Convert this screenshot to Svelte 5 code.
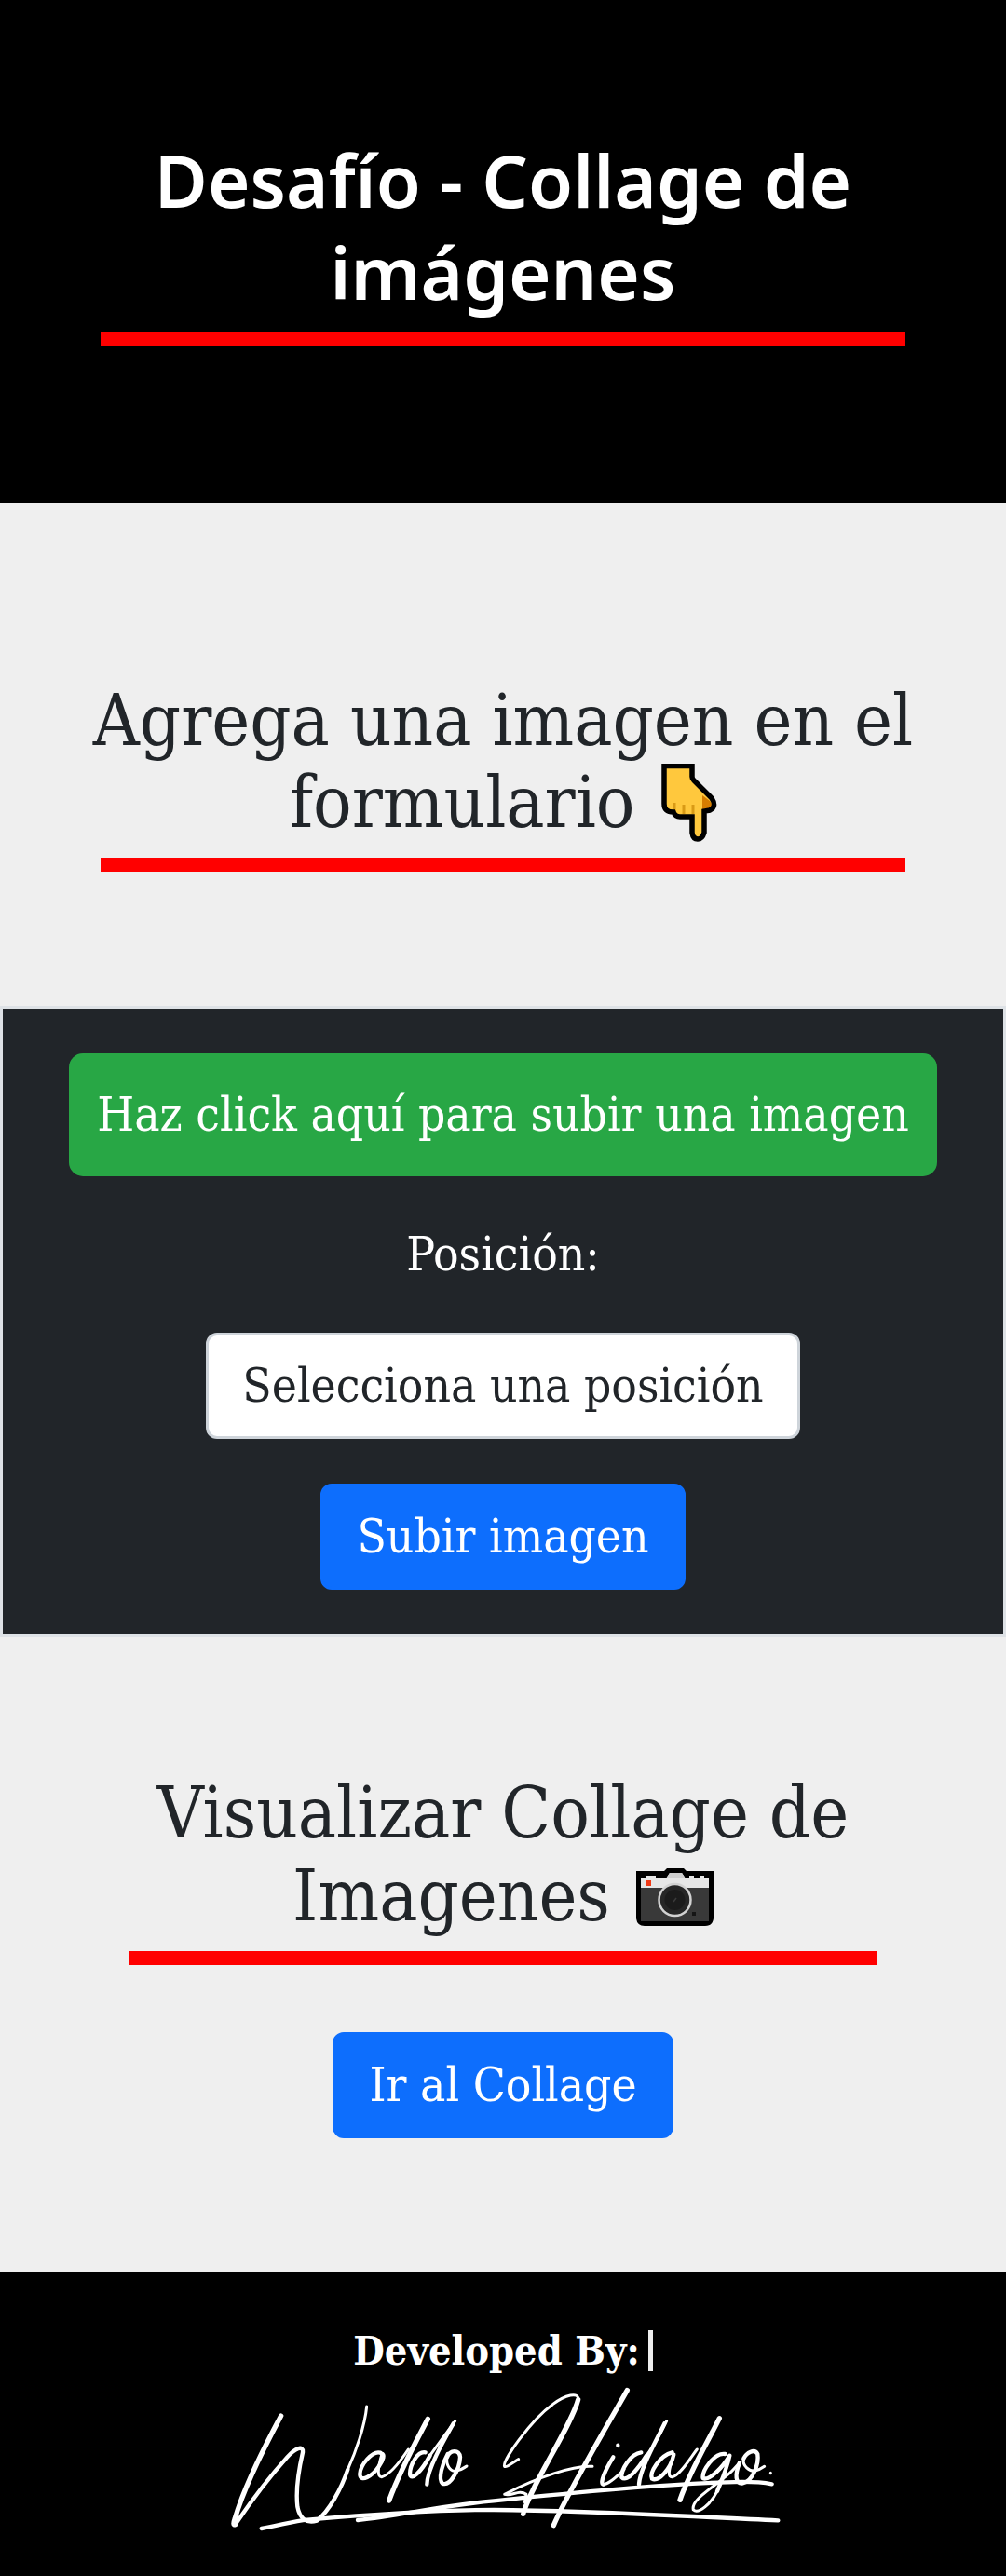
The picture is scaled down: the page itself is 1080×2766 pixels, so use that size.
<script>
  const positions = ['1', '2', '3', '4', '5', '6', '7', '8', '9'];
  let position = $state('');
</script>

<header class="hero">
  <h1>Desafío - Collage de imágenes</h1>
  <div class="rule"></div>
</header>

<main>
  <section class="intro">
    <h2>
      Agrega una imagen en el formulario
      <svg class="emoji hand" viewBox="0 0 60 84" role="img" aria-label="abajo">
        <path d="M3 2.500H33V16L54 37Q60 46 52 50L46 51V74Q44 81 39 81Q34 81 33 74V57H20Q15 57 13 52Q3 52 3 43Z" fill="#ffc83d" />
        <path d="M44 34L52 40Q57 46 51 48L44 49Z" fill="#d67d00" />
        <path d="M14 42V51M24 44V54M34 44V54" stroke="#d99a16" stroke-width="3" fill="none" />
        <path d="M3 2.500H33V14Q33 16 35 18L54 37Q60 46 52 50L46 51V74Q44 81 39 81Q34 81 33 74V57H20Q15 57 13 52Q3 52 3 43Z" fill="none" stroke="#000" stroke-width="5.500" />
      </svg>
    </h2>
    <div class="rule"></div>
  </section>

  <form class="panel" onsubmit={(event) => event.preventDefault()}>
    <label class="upload" for="imagen">Haz click aquí para subir una imagen</label>
    <input class="file" id="imagen" type="file" accept="image/*" />
    <label class="caption" for="posicion">Posición:</label>
    <select id="posicion" bind:value={position}>
      <option value="">Selecciona una posición</option>
      {#each positions as item}
        <option value={item}>{item}</option>
      {/each}
    </select>
    <button class="action" type="submit">Subir imagen</button>
  </form>

  <section class="viewer">
    <h2>
      Visualizar Collage de Imagenes
      <svg class="emoji camera" viewBox="0 0 83 62" role="img" aria-label="cámara">
        <path d="M0 3H30L33 0H51L54 3H83V54Q82 62 74 62H9Q1 62 0 54Z" fill="#000" />
        <path d="M5 11H11V8H21V11H32L36 5H49L53 11H57V8H62V11H68V8H73V11H78V21H5Z" fill="#e6e6e6" />
        <path d="M32 11L36 5H49L53 11Z" fill="#cfcfcf" />
        <path d="M5 21H78V57H5Z" fill="#393939" />
        <path d="M10 13H16V19H10Z" fill="#f03a17" />
        <path d="M60 47H64V51H60Z" fill="#151515" />
        <circle cx="41.500" cy="34" r="17" fill="#262626" stroke="#d2d2d2" stroke-width="2.500" />
        <circle cx="41.500" cy="34" r="11" fill="#1b1b1b" />
        <path d="M40 36L43 32" stroke="#3a3a3a" stroke-width="1.500" />
      </svg>
    </h2>
    <div class="rule"></div>
    <a class="action" href="#collage">Ir al Collage</a>
  </section>
</main>

<footer>
  <p>Developed By:<span class="caret"></span></p>
  <svg class="signature" viewBox="0 15 1860 560" role="img" aria-label="Waldo Hidalgo">
    <g fill="none" stroke="#fff" stroke-linecap="round" stroke-linejoin="round">
      <g stroke-width="16">
        <path d="M215 117C160 220 95 350 67 447Q58 472 68 467" />
        <path d="M688 127C650 200 600 290 563 390" />
        <path d="M1172 65C1150 150 1020 340 995 433" />
        <path d="M1330 35C1270 140 1140 360 1093 470" />
        <path d="M1627 125C1590 200 1530 300 1500 388" />
      </g>
      <g stroke-width="13">
        <path d="M68 467C120 390 190 300 235 250C260 222 287 210 285 235C270 300 262 360 268 410C275 450 300 465 330 455C370 425 410 350 430 290" />
        <path d="M535 236C510 228 470 275 469 305C470 335 510 310 530 280C545 260 550 240 538 238" />
        <path d="M680 235C655 230 630 275 630 305C634 328 665 300 695 245M770 142C740 195 685 290 685 338" />
        <path d="M752 240C735 270 720 320 735 335C760 345 790 290 792 250C790 225 760 225 750 250" />
        <path d="M1285 250C1260 290 1240 335 1253 338M1300 212V213" />
        <path d="M1375 235C1340 240 1310 290 1312 315C1330 335 1370 280 1392 245M1450 142C1425 195 1370 290 1368 338" />
        <path d="M1475 235C1435 245 1400 300 1410 320C1430 330 1470 290 1480 242" />
        <path d="M1645 240C1610 235 1570 295 1574 318C1595 328 1640 280 1660 245C1650 290 1640 310 1620 360" />
        <path d="M1692 268C1675 310 1680 335 1700 335C1735 330 1755 270 1750 240C1740 222 1715 235 1705 255" />
        <path d="M152 480C210 470 260 455 300 452C500 435 700 420 900 420C1200 422 1500 440 1816 454" />
        <path d="M462 453C600 440 700 410 900 391C1200 360 1500 335 1650 331C1720 328 1760 330 1796 337" />
      </g>
      <g stroke-width="9">
        <path d="M430 290C455 235 485 150 491 87" />
        <path d="M540 240C525 290 525 315 540 314C570 305 605 255 625 225" />
        <path d="M750 250C745 275 760 295 775 295C795 292 805 285 813 279M695 245Q720 210 776 134" />
        <path d="M980 257C965 265 940 285 935 280C925 265 1020 130 1090 80C1130 50 1175 38 1172 65" />
        <path d="M1218 280C1160 275 1040 315 935 370C960 378 980 352 1005 370L1000 395" />
        <path d="M1253 338C1270 338 1300 310 1320 290M1392 245Q1420 210 1457 134" />
        <path d="M1480 242C1460 300 1462 315 1475 314C1500 310 1535 250 1555 225" />
        <path d="M1620 360C1600 400 1560 435 1543 420C1535 390 1590 360 1650 310C1670 295 1685 275 1692 268" />
        <path d="M1705 255C1700 280 1725 295 1740 295C1755 292 1765 285 1772 280M1792 301V302" />
      </g>
    </g>
  </svg>
</footer>

<style>
  :global(body) {
    margin: 0;
    background: #efefef;
    color: #212529;
    font-family: "DejaVu Serif Condensed", "DejaVu Serif", serif;
    font-size: 51px;
    line-height: 72px;
  }

  h1,
  h2,
  p {
    margin: 0;
    text-align: center;
  }

  .hero {
    box-sizing: border-box;
    min-height: 540px;
    padding: 144px 108px 168px;
    background: #000;
    color: #fff;
  }

  h1 {
    padding-bottom: 15px;
    font-family: "Noto Sans", "Open Sans", sans-serif;
    font-size: 78px;
    font-weight: 600;
    line-height: 99px;
  }

  h2 {
    padding-bottom: 15px;
    font-size: 77px;
    font-weight: 400;
    line-height: 88px;
  }

  .rule {
    height: 15px;
    background: #f00;
  }

  .intro {
    padding: 190px 90px 144px;
  }

  .intro .rule {
    margin: 0 18px;
  }

  .emoji {
    margin-left: 6px;
  }

  .hand {
    width: 60px;
    height: 84px;
    vertical-align: -16px;
  }

  .camera {
    width: 83px;
    height: 62px;
    vertical-align: -6px;
  }

  .panel {
    display: flex;
    flex-direction: column;
    align-items: center;
    gap: 48px;
    padding: 48px 24px;
    border: 3px solid #dee2e6;
    background: #212529;
    color: #fff;
  }

  .upload {
    padding: 30px;
    border-radius: 15px;
    background: #28a745;
    cursor: pointer;
  }

  .file {
    position: absolute;
    width: 1px;
    height: 1px;
    opacity: 0;
  }

  select,
  .action {
    box-sizing: border-box;
    padding: 18px 36px;
    border: 3px solid #ced4da;
    border-radius: 12px;
    background: #fff;
    color: #212529;
    font: inherit;
    text-align: center;
    text-align-last: center;
    appearance: none;
  }

  .action {
    border-color: #0d6efd;
    background: #0d6efd;
    color: #fff;
    text-decoration: none;
    cursor: pointer;
  }

  .viewer {
    display: flex;
    flex-direction: column;
    align-items: center;
    padding: 144px 138px;
  }

  .viewer h2 {
    line-height: 89px;
  }

  .viewer .rule {
    align-self: stretch;
    margin-bottom: 72px;
  }

  footer {
    display: flex;
    flex-direction: column;
    align-items: center;
    padding: 48px 24px;
    background: #000;
    color: #fff;
  }

  p {
    display: flex;
    align-items: center;
    gap: 9px;
    font-size: 43px;
    font-weight: 700;
  }

  .caret {
    width: 5px;
    height: 44px;
    background: #eee;
  }

  .signature {
    width: 100%;
    max-width: 620px;
  }
</style>
